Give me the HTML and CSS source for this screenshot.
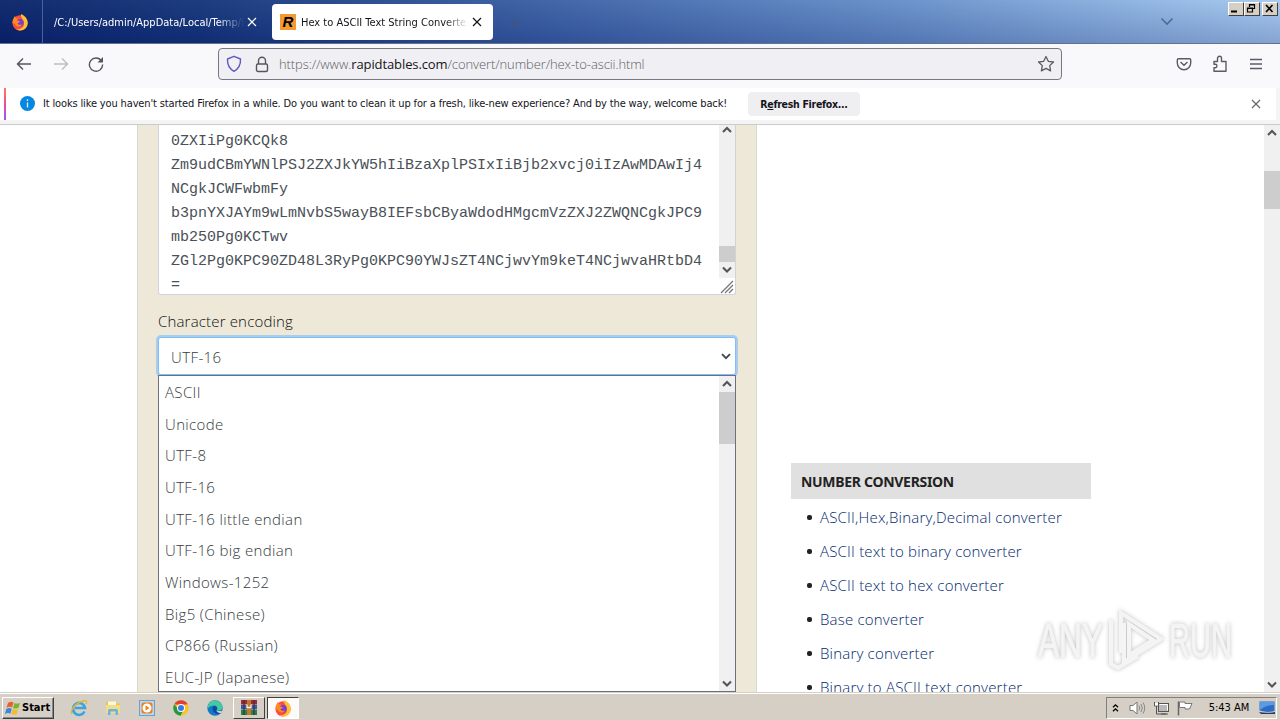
FILE: index.html
```html
<!DOCTYPE html>
<html lang="en">
<head>
<meta charset="UTF-8" />
<meta name="viewport" content="width=device-width, initial-scale=1.0">
<title>Hex to ASCII Text String Converter</title>
<link rel="stylesheet" href="styles.css">
</head>

<body>

  <!-- shapes used more than once -->
  <svg width="0" height="0" class="defs">
    <defs>
      <symbol id="up" viewBox="0 0 10 8"><path d="M1 6 5 2 9 6" fill="none" stroke="#555" stroke-width="2.1"/></symbol>
      <symbol id="down" viewBox="0 0 10 8"><path d="M1 1.500 5 5.500 9 1.500" fill="none" stroke="#555" stroke-width="2.1"/></symbol>
      <symbol id="cross" viewBox="0 0 10 10"><path d="M1 1 9 9M9 1 1 9" fill="none" stroke="currentColor" stroke-width="1.2"/></symbol>
      <symbol id="fox" viewBox="0 0 18 18">
        <circle cx="9" cy="9.8" r="7.6" fill="#ff4a3d"/>
        <path d="M10 1c4 2 7 5 6.700 9.500A7.600 7.600 0 0 1 5 16.300C12 17 14 12 12.500 8 11.500 5.500 9.500 4 10 1z" fill="#ffc02e"/>
        <path d="M1.500 10C1.500 7 2.500 5 4 3l1 2.200 3 .8-1 2-4 3z" fill="#ff8a20"/>
        <circle cx="9" cy="9.800" r="3.700" fill="#7b3fd0"/>
        <path d="M4 8c2-1 3.500 0 5 .3-.5 1.500-2 1-2.500 2.200.7 1.500 2.700 1.700 4.500.7-1 3-5.500 3-7 .3z" fill="#ff8a20"/>
      </symbol>
    </defs>
  </svg>

  <!-- tab strip -->
  <header class="tabs">
    <div class="pinned"><svg width="18" height="18"><use href="#fox"/></svg></div>
    <div class="tab">
      <span class="tab-text first">/C:/Users/admin/AppData/Local/Temp/F</span>
      <svg width="10" height="10"><use href="#cross"/></svg>
    </div>
    <div class="tab active">
      <span class="favicon">R</span>
      <span class="tab-text second">Hex to ASCII Text String Converter</span>
      <svg width="10" height="10"><use href="#cross"/></svg>
    </div>
    <svg class="plus" width="10" height="10"><path d="M5 0v10M0 5h10" stroke="#4c5560" stroke-width="1.500"/></svg>
    <svg class="all-tabs" width="14" height="9"><path d="M1.500 1.500 7 7l5.500-5.500" fill="none" stroke="#4c6a9b" stroke-width="1.600"/></svg>
    <div class="win-buttons">
      <span><svg width="13" height="11"><path d="M2 8.500h6" stroke="#000" stroke-width="2"/></svg></span>
      <span><svg width="13" height="11"><path d="M4.500 4V1.500h5v4H8M4 2h6M2.500 5h5v4h-5zM2 5.500h6" fill="none" stroke="#000" stroke-width="1.200"/></svg></span>
      <span class="close"><svg width="13" height="11"><path d="M3 2l6.500 7M9.500 2 3 9" stroke="#000" stroke-width="1.700"/></svg></span>
    </div>
  </header>

  <!-- navigation bar -->
  <nav class="toolbar">
    <svg class="back" width="16" height="14"><path d="M15 7H1.500M7 1.500 1.500 7 7 12.500" fill="none" stroke="#55555f" stroke-width="1.400"/></svg>
    <svg class="forward" width="16" height="14"><path d="M1 7h13.500M9 1.500 14.500 7 9 12.500" fill="none" stroke="#bdbdc3" stroke-width="1.400"/></svg>
    <svg class="reload" width="16" height="16"><path d="M13.500 5A6.600 6.600 0 1 0 14.600 8.500" fill="none" stroke="#55555f" stroke-width="1.400"/><path d="M15 1v5.500H9.500z" fill="#55555f"/></svg>
    <div class="urlbar">
      <svg class="shield" width="16" height="18"><path d="M8 1.300 14.500 4c.3 5.500-1.500 9.500-6.500 12.300C3 13.500 1.200 9.500 1.500 4z" fill="none" stroke="#6258c0" stroke-width="1.400" stroke-linejoin="round"/></svg>
      <svg class="lock" width="14" height="17"><path d="M3.500 8V4.700a3.500 3.500 0 0 1 7 0V8" fill="none" stroke="#55555f" stroke-width="1.400"/><rect x="1.500" y="8" width="11" height="7.500" rx="1.500" fill="none" stroke="#55555f" stroke-width="1.400"/></svg>
      <span class="url">https://www.<b>rapidtables.com</b>/convert/number/hex-to-ascii.html</span>
      <svg class="star" width="18" height="18"><path d="M9 1.500l2.300 4.800 5.200.7-3.800 3.600.9 5.300L9 13.400l-4.600 2.500.9-5.300L1.500 7l5.200-.7z" fill="none" stroke="#5b5b66" stroke-width="1.300" stroke-linejoin="round"/></svg>
    </div>
    <svg class="pocket" width="16" height="14"><path d="M2.500 1.700h11a1.200 1.200 0 0 1 1.200 1.200V6A6.700 6.700 0 0 1 1.300 6V2.900a1.200 1.200 0 0 1 1.200-1.200zM4.500 5 8 8.300 11.500 5" fill="none" stroke="#5b5b66" stroke-width="1.400"/></svg>
    <svg class="puzzle" width="16" height="18"><path d="M2 6.500h3.500V3.300a2 2 0 0 1 4 0v3.200H14v9.800H2v-3.500h1.200a1.700 1.700 0 0 0 0-3.500H2z" fill="none" stroke="#5b5b66" stroke-width="1.400" stroke-linejoin="round"/></svg>
    <svg class="menu" width="12" height="12"><path d="M0 1.500h12M0 6h12M0 10.500h12" stroke="#5b5b66" stroke-width="1.300"/></svg>
  </nav>

  <!-- welcome back message -->
  <div class="notice">
    <svg class="info" width="15" height="15"><circle cx="7.500" cy="7.500" r="7.500" fill="#0788e0"/><path d="M7.500 6.500V11.500M7.500 3.300v1.700" stroke="#d8efff" stroke-width="1.300"/></svg>
    <span class="notice-text">It looks like you haven't started Firefox in a while. Do you want to clean it up for a fresh, like-new experience? And by the way, welcome back!</span>
    <button class="refresh"><span>R<u>e</u>fresh Firefox...</span></button>
    <svg class="dismiss" width="10" height="10"><use href="#cross"/></svg>
  </div>

  <!-- web page -->
  <main class="page">
    <article class="converter">
      <div class="textarea">
        <div class="code">0ZXIiPg0KCQk8
Zm9udCBmYWNlPSJ2ZXJkYW5hIiBzaXplPSIxIiBjb2xvcj0iIzAwMDAwIj4
NCgkJCWFwbmFy
b3pnYXJAYm9wLmNvbS5wayB8IEFsbCByaWdodHMgcmVzZXJ2ZWQNCgkJPC9
mb250Pg0KCTwv
ZGl2Pg0KPC90ZD48L3RyPg0KPC90YWJsZT4NCjwvYm9keT4NCjwvaHRtbD4
=</div>
        <div class="area-side">
          <div class="scroll area-scroll">
            <svg width="10" height="8"><use href="#up"/></svg>
            <i class="thumb"></i>
            <svg width="10" height="8"><use href="#down"/></svg>
          </div>
          <svg width="16" height="16"><path d="M2 15 14 3M6 15l8-8M10 15l4-4" stroke="#777" stroke-width="1.300"/></svg>
        </div>
      </div>

      <label class="label">Character encoding</label>
      <div class="select">
        <span>UTF-16</span>
        <svg width="10" height="7" viewBox="0 0 10 7"><path d="M1 1.200 5 5.200 9 1.200" fill="none" stroke="#3f4650" stroke-width="1.800"/></svg>
      </div>

      <div class="dropdown">
        <ul>
          <li>ASCII</li>
          <li>Unicode</li>
          <li>UTF-8</li>
          <li>UTF-16</li>
          <li>UTF-16 little endian</li>
          <li>UTF-16 big endian</li>
          <li>Windows-1252</li>
          <li>Big5 (Chinese)</li>
          <li>CP866 (Russian)</li>
          <li>EUC-JP (Japanese)</li>
        </ul>
        <div class="scroll list-scroll">
          <svg width="10" height="8"><use href="#up"/></svg>
          <i class="thumb"></i>
          <svg width="10" height="8"><use href="#down"/></svg>
        </div>
      </div>
    </article>

    <aside class="sidebar">
      <h5>NUMBER CONVERSION</h5>
      <ul>
        <li><a>ASCII,Hex,Binary,Decimal converter</a></li>
        <li><a>ASCII text to binary converter</a></li>
        <li><a>ASCII text to hex converter</a></li>
        <li><a>Base converter</a></li>
        <li><a>Binary converter</a></li>
        <li><a>Binary to ASCII text converter</a></li>
      </ul>
    </aside>

    <div class="scroll page-scroll">
      <svg width="10" height="8"><use href="#up"/></svg>
      <i class="thumb"></i>
      <svg width="10" height="8"><use href="#down"/></svg>
    </div>
  </main>

  <!-- taskbar -->
  <footer class="taskbar">
    <div class="start">
      <svg width="17" height="16"><path d="M3 3q3-2 5.500-.5L7 7.500Q4.500 6 1.500 7.800z" fill="#e8602c"/><path d="M9.500 3q3 1.300 5.500-.3l-1.500 5Q11 9.200 8 7.900z" fill="#79b52c"/><path d="M1.300 9q3-1.700 5.400-.3l-1.400 5Q3 12.300 0 14z" fill="#3a86d8"/><path d="M7.700 9q2.800 1.500 5.500 0l-1.500 5Q9 15.500 6.300 14z" fill="#f5bd27"/></svg>
      <b>Start</b>
    </div>
    <div class="launch">
      <svg width="18" height="18"><path d="M14.500 12.500A6 6 0 1 1 15 9H5" fill="none" stroke="#3ba4e0" stroke-width="2.600"/><path d="M2 15C-1 13 5 4 13 2c4-1 4 1 3.300 3" fill="none" stroke="#e5b632" stroke-width="1.300"/></svg>
      <svg width="18" height="18"><path d="M2 3h5l1 1.500h8V14H2z" fill="#e6c65c"/><path d="M4 2.500h8v5H4z" fill="#fff7d0"/><path d="M2 6h14v8H2z" fill="#f3dc88"/><path d="M4 16v-4.500q0-1.500 1.500-1.500h7q1.500 0 1.500 1.500V16h-2.500v-3.500h-5V16z" fill="#6db4dc"/></svg>
      <svg width="18" height="18"><rect x="1.500" y="1.500" width="15" height="15" fill="#b9d7ee" stroke="#6d9fc9"/><rect x="3.500" y="3.500" width="11" height="11" rx="2" fill="#ed8120"/><circle cx="9" cy="9" r="4.500" fill="#fff"/><path d="M7.500 6.300v5.400L11.500 9z" fill="#ed8120"/></svg>
      <svg width="18" height="18"><circle cx="9" cy="9" r="7.700" fill="#f7c52b"/><path d="M2.300 5.200A7.700 7.700 0 0 1 15.700 5.200L9 6z" fill="#df4032"/><path d="M2.300 5.200A7.700 7.700 0 0 0 8.500 16.700L11.500 11 6 10z" fill="#25974a"/><circle cx="9" cy="9" r="4" fill="#fff"/><circle cx="9" cy="9" r="3" fill="#3b78e0"/></svg>
      <svg width="18" height="18"><circle cx="9" cy="9" r="7.700" fill="#1477c8"/><path d="M2 6.500C4-.5 15 0 16.600 8c.3 3-3.500 4.300-6 3 1.800-1.500.5-4.300-2-4.500C6 6.300 3.500 7 1.500 10z" fill="#45c9a1"/><path d="M8 7c-2.500 2-1.500 6 2 7.500 2 .8 4 .3 5.300-.7-2 .3-4.500-.6-5-2.600 1.800-1.500.5-4-2.300-4.200z" fill="#0c4b9d"/><path d="M10.300 11.200q2 1.500 5.700.5l-1 2.300q-4 0-4.700-2.800z" fill="#d7d0c8"/></svg>
    </div>
    <div class="task rar"><svg width="18" height="17"><path d="M1 1h16v4.500H1z" fill="#a12b35"/><path d="M1 6h16v4.500H1z" fill="#315fae"/><path d="M1 11h16v5H1z" fill="#278347"/><path d="M4 1v15M14 1v15" stroke="#4b2e3b" stroke-width="1.300"/><path d="M7 1h4v15H7z" fill="#bd7a2c"/><path d="M7 5.500v3h4v-3" fill="none" stroke="#fff2ca" stroke-width="1.300"/></svg></div>
    <div class="task open"><svg width="18" height="18"><use href="#fox"/></svg></div>
    <div class="tray">
      <svg class="chev" width="7" height="10"><path d="M1 4.300 3.500 1.800 6 4.300M1 8.300 3.500 5.800 6 8.300" fill="none" stroke="#000" stroke-width="1.300"/></svg>
      <svg class="sound" width="17" height="16"><path d="M1 5.500h3L8 2v12l-4-3.500H1z" fill="#fff" stroke="#777"/><path d="M10 5.500q1.500 2.500 0 5M12 4q2.700 4 0 8M14 2.500q3.500 5.500 0 11" fill="none" stroke="#888"/></svg>
      <svg class="net" width="17" height="16"><rect x="5.500" y="3.500" width="10" height="8" fill="#b9b9b9" stroke="#555"/><path d="M6.500 4.500h8v6" fill="none" stroke="#fff"/><path d="M1.500 2v4h4V2M3.500 6v8H13M8 14h7" fill="none" stroke="#555"/><path d="M2 3h3v2.500H2z" fill="#fff"/></svg>
      <svg class="flag" width="17" height="16"><path d="M1.500 1.500v14" stroke="#666" stroke-width="1.500"/><path d="M2.500 2h5.500v1.500h7L12.500 9H8V7.500H2.500z" fill="#fff" stroke="#777"/></svg>
      <span class="clock">5:43 AM</span>
      <svg class="desk" width="16" height="14"><path d="M.5.500h15v9.500q-7 2-15-.5z" fill="#2d6cc4"/><path d="M1 1h14v3Q7 4 1 9z" fill="#5b9be2"/><path d="M0 11q8 1.500 16 0v2H2z" fill="#243b68"/></svg>
    </div>
  </footer>

  <!-- watermark over the page -->
  <svg class="watermark" width="204" height="70">
    <g class="mark">
      <text x="4" y="51" textLength="65" lengthAdjust="spacingAndGlyphs">ANY</text>
      <text x="135" y="51" textLength="63" lengthAdjust="spacingAndGlyphs">RUN</text>
      <path d="M87 47V7l40 26-37 23V17M77 14v44l7 4 20-12M95 18v31l24-15z"/>
    </g>
  </svg>

</body>

</html>
```
FILE: styles.css
```css
/* whole screen */
body
{
  margin: 0;
  width: 1280px;
  height: 720px;
  overflow: hidden;
  display: flex;
  flex-direction: column;
  position: relative;
  background: #fff;
  color: #15141a;
  font-family: "Noto Sans", sans-serif;
}
svg
{
  display: block;
  flex: none;
}
.defs
{
  position: absolute;
}
ul
{
  list-style: none;
  margin: 0;
  padding: 0;
}
/* tab strip */
.tabs
{
  height: 44px;
  flex: none;
  display: flex;
  align-items: flex-start;
  box-sizing: border-box;
  border-bottom: 1px solid #66718d;
  background: linear-gradient(180deg, rgba(255,255,255,.04), rgba(0,10,90,.2)), linear-gradient(90deg, #0a246a 0, #14357a 200px, #3c62a6 560px, #6690c9 900px, #a6caf0 1280px);
  font: 11px "DejaVu Sans Condensed", "DejaVu Sans", sans-serif;
}
.pinned
{
  width: 43px;
  height: 43px;
  border-right: 1px solid #4b6295;
  padding: 13px 0 0 11px;
  box-sizing: border-box;
  margin-right: 1px;
}
.tab
{
  width: 228px;
  height: 36px;
  margin-top: 4px;
  box-sizing: border-box;
  display: flex;
  align-items: center;
  padding-left: 10px;
  color: #fff;
}
.active
{
  width: 221px;
  padding-left: 8px;
  border-radius: 4px;
  background: #fff;
  color: #15141a;
}
.tab-text
{
  overflow: hidden;
  white-space: nowrap;
  padding-top: 1px;
  -webkit-mask-image: linear-gradient(90deg, #000 86%, transparent);
  mask-image: linear-gradient(90deg, #000 86%, transparent);
}
.first
{
  width: 190px;
  margin-right: 3px;
}
.second
{
  width: 167px;
  margin-right: 4px;
}
.favicon
{
  width: 16px;
  height: 16px;
  margin-right: 5px;
  background: #f59a32;
  color: #000;
  font: italic bold 15px/16px "Liberation Sans", sans-serif;
  text-align: center;
}
.plus
{
  margin: 18px 0 0 17px;
  opacity: .6;
}
.all-tabs
{
  margin: 17px 0 0 640px;
}
.win-buttons
{
  display: flex;
  margin: 2px 2px 0 auto;
}
.win-buttons span
{
  width: 16px;
  height: 14px;
  box-sizing: border-box;
  background: #d6cfc6;
  border: 1px solid;
  border-color: #fff #404040 #404040 #fff;
}
.win-buttons .close
{
  margin-left: 2px;
}
/* navigation bar */
.toolbar
{
  height: 44px;
  flex: none;
  display: flex;
  align-items: center;
  box-sizing: border-box;
  padding: 0 18px 4px 16px;
  background: #f9f9fb;
}
.forward
{
  margin-left: 21px;
}
.reload
{
  margin-left: 19px;
}
.urlbar
{
  width: 844px;
  height: 32px;
  flex: none;
  margin: 0 114px;
  box-sizing: border-box;
  border: 1px solid #77777d;
  border-radius: 4px;
  background: #f0f0f4;
  display: flex;
  align-items: center;
  padding: 0 6px 0 7px;
}
.lock
{
  margin: 0 10px 0 13px;
}
.url
{
  font: 300 13px "Open Sans", sans-serif;
  letter-spacing: -.1px;
  color: #5c5c62;
  white-space: nowrap;
}
.url b
{
  font-weight: 400;
  color: #15141a;
}
.star
{
  margin-left: auto;
}
.puzzle
{
  margin-left: 20px;
}
.menu
{
  margin-left: 22px;
}
/* welcome back message */
.notice
{
  height: 37px;
  flex: none;
  display: flex;
  align-items: center;
  box-sizing: border-box;
  padding: 0 19px 5px 16px;
  border-bottom: 1px solid #cbcbcd;
  background: linear-gradient(180deg, #ff7a59, #f04a9c 50%, #9059ff) 4px 0 / 2px 32px no-repeat, linear-gradient(#fff, #fff) 0 0 / 1276px 32px no-repeat, #f4f4f5;
}
.info
{
  margin: 0 8px 0 4px;
}
.notice-text
{
  font: 11px "DejaVu Sans Condensed", "DejaVu Sans", sans-serif;
  letter-spacing: -.145px;
  white-space: nowrap;
}
.refresh
{
  width: 112px;
  height: 24px;
  flex: none;
  margin-left: auto;
  margin-right: 391px;
  padding: 1px 0 0;
  border: 0;
  border-radius: 4px;
  background: #efeff1;
  color: #15141a;
  font: bold 10.5px "DejaVu Sans Condensed", "DejaVu Sans", sans-serif;
  letter-spacing: -.3px;
  white-space: nowrap;
}
.dismiss
{
  color: #66666b;
}
/* web page */
.page
{
  height: 567px;
  flex: none;
  display: flex;
  overflow: hidden;
}
.converter
{
  width: 620px;
  margin-left: 137px;
  padding: 0 20px;
  box-sizing: border-box;
  background: #eee8d8;
  border-left: 1px solid #d9d9d2;
  border-right: 1px solid #d9d9d2;
}
/* text box */
.textarea
{
  height: 170px;
  box-sizing: border-box;
  display: flex;
  justify-content: space-between;
  background: #fff;
  border: 1px solid #ced4da;
  border-top: 0;
  border-radius: 0 0 3px 3px;
  overflow: hidden;
}
.code
{
  padding: 5px 0 0 12px;
  white-space: pre;
  font: 15px/24px "Liberation Mono", monospace;
  color: #495057;
}
.area-side
{
  width: 16px;
}
/* scroll bars */
.scroll
{
  display: flex;
  flex-direction: column;
  align-items: center;
  justify-content: space-between;
  box-sizing: border-box;
  flex: none;
  width: 16px;
  background: #f0f0f0;
}
.thumb
{
  width: 100%;
  background: #cdcdcd;
}
.area-scroll
{
  height: 153px;
  padding: 1px 0 4px;
}
.area-scroll .thumb
{
  height: 16px;
  margin: 112px 0 4px;
}
.list-scroll
{
  padding: 4px 0 3px;
}
.list-scroll .thumb
{
  height: 52px;
  margin: 4px 0 auto;
}
.page-scroll
{
  margin-left: auto;
  padding: 4px 0 3px;
}
.page-scroll .thumb
{
  height: 38px;
  margin: 34px 0 auto;
}
/* encoding select */
.label
{
  display: block;
  height: 24px;
  margin: 14px 0 4px;
  font: 300 15px/24px "Open Sans", sans-serif;
  letter-spacing: .17px;
  color: #111;
}
.select
{
  height: 38px;
  box-sizing: border-box;
  display: flex;
  align-items: center;
  justify-content: space-between;
  padding: 1px 4px 0 12px;
  border: 1px solid #80bdff;
  border-radius: 3px;
  box-shadow: 0 0 0 2px #a9cdea;
  background: #fff;
  font: 300 15px "Open Sans", sans-serif;
  letter-spacing: .4px;
  color: #343a40;
}
.dropdown
{
  position: relative;
  height: 317px;
  box-sizing: border-box;
  display: flex;
  justify-content: space-between;
  border: 1px solid #6c7078;
  background: #fff;
}
.dropdown li
{
  height: 31.67px;
  padding-left: 6px;
  font: 300 15px/32px "Open Sans", sans-serif;
  letter-spacing: .35px;
  color: #343a40;
}
/* right column */
.sidebar
{
  width: 300px;
  margin-left: 34px;
  padding-top: 338px;
}
.sidebar h5
{
  height: 36px;
  margin: 0 0 1px;
  padding-left: 10px;
  background: #e0e0e0;
  font: bold 14px/38px "Noto Sans", sans-serif;
  letter-spacing: -.3px;
  color: #222;
}
.sidebar li
{
  height: 34px;
  display: flex;
  align-items: center;
  padding-left: 16px;
  font: 300 15px "Open Sans", sans-serif;
  letter-spacing: .2px;
  white-space: nowrap;
}
.sidebar li::before
{
  content: "";
  width: 5px;
  height: 5px;
  border-radius: 2px;
  margin: 1px 8px 0 0;
  background: #222;
}
.sidebar a
{
  color: #00286e;
}
/* taskbar */
.taskbar
{
  height: 28px;
  flex: none;
  display: flex;
  align-items: center;
  box-sizing: border-box;
  border-top: 1px solid #d6cfc6;
  box-shadow: inset 0 1px 0 #fff;
  padding: 2px 3px 0 2px;
  background: #d6cfc6;
}
.start
{
  width: 52px;
  height: 22px;
  box-sizing: border-box;
  display: flex;
  align-items: center;
  padding-left: 2px;
  border: 1px solid;
  border-color: #fff #404040 #404040 #fff;
  box-shadow: inset -1px -1px 0 #888;
  font: 11px "DejaVu Sans Condensed", "DejaVu Sans", sans-serif;
  color: #000;
}
.launch
{
  display: flex;
  gap: 16px;
  margin: 0 9px 0 16px;
}
.task
{
  width: 32px;
  height: 22px;
  box-sizing: border-box;
  display: flex;
  align-items: center;
  justify-content: center;
  border: 1px solid;
  border-color: #fff #404040 #404040 #fff;
}
.open
{
  margin-left: 2px;
  border-color: #404040 #fff #fff #404040;
  background: #fcfbfa;
}
.tray
{
  width: 171px;
  height: 22px;
  margin-left: auto;
  box-sizing: border-box;
  display: flex;
  align-items: center;
  padding: 0 1px 0 5px;
  border: 1px solid;
  border-color: #808080 #fff #fff #808080;
}
.sound
{
  margin-left: 10px;
}
.net
{
  margin-left: 7px;
}
.flag
{
  margin-left: 7px;
}
.clock
{
  margin: 0 auto;
  padding-left: 5px;
  font: 11px "DejaVu Sans Condensed", "DejaVu Sans", sans-serif;
  color: #000;
  white-space: nowrap;
}
/* watermark */
.watermark
{
  position: absolute;
  left: 1034px;
  top: 606px;
}
.mark
{
  filter: drop-shadow(0 0 2px rgba(0,0,0,.25));
}
.mark text
{
  font: 48px "Liberation Sans", sans-serif;
  fill: #f4f4f4;
  stroke: #f4f4f4;
}
.mark path
{
  fill: none;
  stroke: #f4f4f4;
  stroke-width: 4;
}
```
